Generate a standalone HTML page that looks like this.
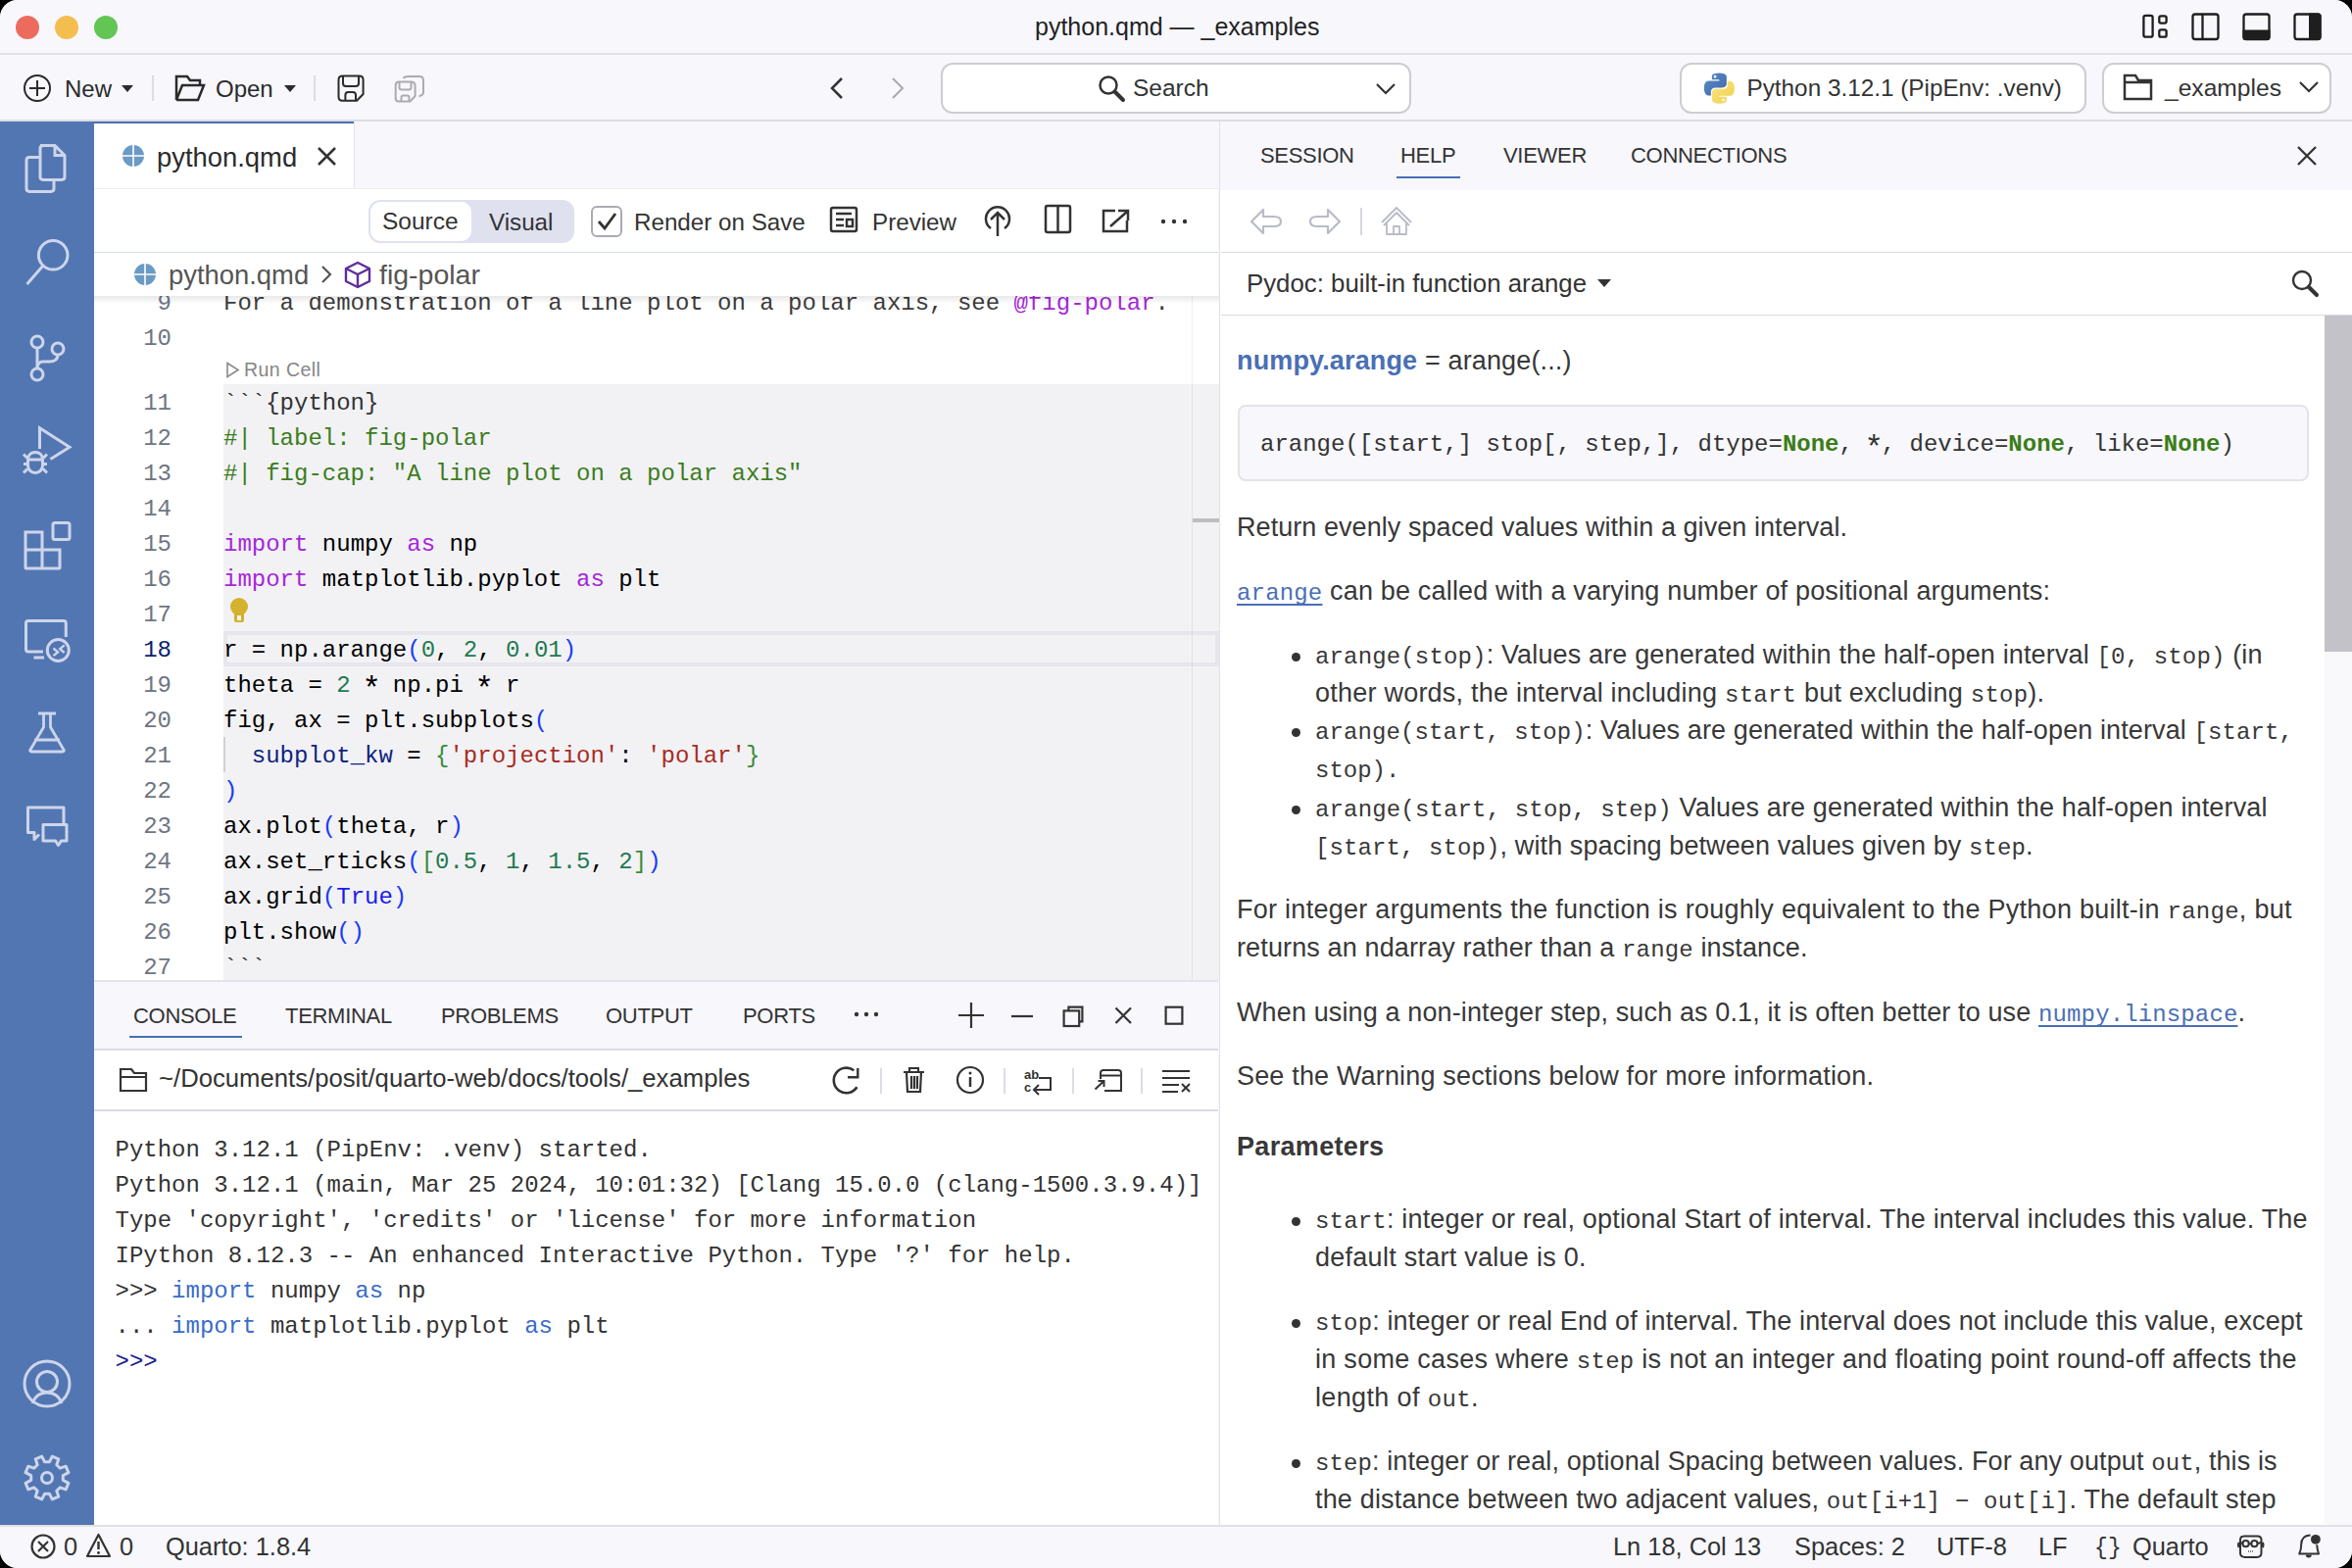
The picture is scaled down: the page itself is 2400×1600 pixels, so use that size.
<!DOCTYPE html>
<html><head><meta charset="utf-8">
<style>
html,body{margin:0;padding:0;}
body{width:2400px;height:1600px;overflow:hidden;background:#000;font-family:"Liberation Sans",sans-serif;color:#333;}
#win{position:absolute;left:0;top:0;width:2400px;height:1600px;border-radius:18px;overflow:hidden;background:#f7f7fc;}
.a{position:absolute;}
.t{position:absolute;white-space:pre;line-height:1;margin-top:-0.8467em;}
.m{font-family:"Liberation Mono",monospace;margin-top:-0.7661em;}
svg{position:absolute;overflow:visible;}
.hp{font-size:27px;color:#383838;}
.mi{font-family:"Liberation Mono",monospace;font-size:24px;}
.lk{color:#4a6fb5;text-decoration:underline;text-underline-offset:4px;text-decoration-thickness:2px;text-decoration-skip-ink:none;}
.hl{position:absolute;height:2px;background:#e3e3ea;}
.vl{position:absolute;width:2px;background:#e3e3ea;}
</style></head><body>
<div id="win">

<!-- TITLE BAR -->
<div class="a" style="left:0;top:0;width:2400px;height:54px;background:#f7f7fc;"></div>
<div class="hl" style="left:0;top:54px;width:2400px;background:#e2e2e8;"></div>
<svg style="left:0;top:0" width="140" height="56">
  <circle cx="28" cy="28" r="12" fill="#ec6b5e"/>
  <circle cx="68" cy="28" r="12" fill="#f4be4f"/>
  <circle cx="108" cy="28" r="12" fill="#62c554"/>
</svg>
<div class="t" id="title" style="left:1056px;top:36.5px;font-size:25px;color:#222;">python.qmd — _examples</div>
<svg style="left:2180px;top:10px" width="200" height="36" fill="none" stroke="#1e1e1e" stroke-width="2.3">
  <rect x="7.4" y="5.8" width="9.2" height="21.9" rx="2"/>
  <rect x="23.3" y="6.3" width="7.3" height="7.3" rx="1.8"/>
  <rect x="23.3" y="20.3" width="7.3" height="7.4" rx="1.8"/>
  <rect x="57.5" y="4.5" width="26" height="25.5" rx="2.5"/>
  <line x1="67.5" y1="4.5" x2="67.5" y2="30"/>
  <rect x="109.5" y="4.5" width="26" height="25.5" rx="2.5"/>
  <path d="M108.4 20.5 H136.6 V28 Q136.6 31.1 133.5 31.1 H111.5 Q108.4 31.1 108.4 28 Z" fill="#1e1e1e" stroke="none"/>
  <rect x="161.5" y="4.5" width="26" height="25.5" rx="2.5"/>
  <path d="M176 3.4 H185.5 Q188.6 3.4 188.6 6.5 V28 Q188.6 31.1 185.5 31.1 H176 Z" fill="#1e1e1e" stroke="none"/>
</svg>

<!-- TOOLBAR -->
<div class="hl" style="left:0;top:122px;width:2400px;background:#dcdce3;"></div>
<svg style="left:0;top:56px" width="460" height="66" fill="none" stroke="#2b2b2b" stroke-width="2.5">
  <circle cx="38" cy="34" r="13" stroke-width="2"/>
  <line x1="38" y1="26" x2="38" y2="42" stroke-width="2"/><line x1="30" y1="34" x2="46" y2="34" stroke-width="2"/>
  <path d="M124 31 L136 31 L130 38 Z" fill="#2b2b2b" stroke="none"/>
  <line x1="156" y1="21" x2="156" y2="47" stroke="#dcdce3" stroke-width="2"/>
  <path d="M180 46 V22 H191 L194 26 H204 V31 M180 46 H202 L208 31 H186 L180 46"/>
  <path d="M290 31 L302 31 L296 38 Z" fill="#2b2b2b" stroke="none"/>
  <line x1="321" y1="21" x2="321" y2="47" stroke="#dcdce3" stroke-width="2"/>
  <g stroke-width="2" stroke-linejoin="round">
  <path d="M349.5 21.5 H366.6 Q370.6 21.5 370.6 25.5 V40 L364 46.8 H349.5 Q345.5 46.8 345.5 42.8 V25.5 Q345.5 21.5 349.5 21.5 Z"/>
  <path d="M350 22 V29 Q350 32 353 32 H363 Q366 32 366 29 V22"/>
  <path d="M352.4 46.5 V41 Q352.4 38 355.4 38 H360 Q363 38 363 41 V46.5"/>
  </g>
  <g stroke="#ababb0" stroke-width="2" stroke-linejoin="round">
   <path d="M407 27.6 H419 Q423.6 27.6 423.6 32 V42 L418.5 47.5 H407 Q403.7 47.5 403.7 44 V31 Q403.7 27.6 407 27.6 Z"/>
   <path d="M407.5 28 V33 Q407.5 35.5 410 35.5 H417 Q419.5 35.5 419.5 33 V28"/>
   <path d="M409.5 47 V43.5 Q409.5 41.5 411.5 41.5 H415.5 Q417.5 41.5 417.5 43.5 V47"/>
   <path d="M411.4 24 Q413 22 416 22 H428 Q432 22 432 26 V38.6 Q432 41 427.5 42.4"/>
  </g>
</svg>
<div class="t" style="left:66px;top:99px;font-size:24px;color:#2b2b2b;">New</div>
<div class="t" style="left:220px;top:99px;font-size:24px;color:#2b2b2b;">Open</div>
<svg style="left:840px;top:70px" width="90" height="40" fill="none" stroke-width="2.5">
  <path d="M19 10 L9 20 L19 30" stroke="#333"/>
  <path d="M71 10 L81 20 L71 30" stroke="#a9a9b0" stroke-width="2"/>
</svg>
<div class="a" style="left:960px;top:64px;width:476px;height:48px;border:2px solid #cdcdd3;border-radius:12px;background:#fff;"></div>
<svg style="left:1120px;top:76px" width="30" height="30" fill="none" stroke="#333" stroke-width="2.5">
  <circle cx="11" cy="11" r="8.5"/><line x1="17.5" y1="17.5" x2="26" y2="26" stroke-width="4" stroke-linecap="round"/>
</svg>
<div class="t" style="left:1156px;top:99px;font-size:24.5px;color:#333;">Search</div>
<svg style="left:1400px;top:78px" width="30" height="24" fill="none" stroke="#333" stroke-width="2.2">
  <path d="M5 8 L14 17 L23 8"/>
</svg>
<div class="a" style="left:1714px;top:64px;width:411px;height:48px;border:2px solid #cdcdd3;border-radius:12px;background:#fff;"></div>
<svg style="left:1736.5px;top:72.6px" width="34.5" height="34.5" viewBox="0 0 110 110"><defs><linearGradient id="pyb" x1="0" y1="0" x2="1" y2="1"><stop offset="0" stop-color="#5b8bc8"/><stop offset="1" stop-color="#3f6aa6"/></linearGradient><linearGradient id="pyy" x1="0" y1="0" x2="1" y2="1"><stop offset="0" stop-color="#f8e58a"/><stop offset="1" stop-color="#f1cf45"/></linearGradient></defs>
  <path d="M54.9 4.5c-25 0-23.5 10.9-23.5 10.9v11.3h23.9v3.4H21.9S5.9 28.3 5.9 53.6c0 25.3 14 24.4 14 24.4h8.4V66.3s-.5-14 13.8-14h23.7s13.4.2 13.4-12.9V17.3S81.2 4.5 54.9 4.5zM41.7 12.1c2.4 0 4.3 1.9 4.3 4.3s-1.9 4.3-4.3 4.3-4.3-1.9-4.3-4.3 1.9-4.3 4.3-4.3z" fill="url(#pyb)"/>
  <path d="M55.6 104.5c25 0 23.5-10.9 23.5-10.9V82.3H55.2v-3.4h33.4s16 1.8 16-23.5c0-25.3-14-24.4-14-24.4h-8.4v11.7s.5 14-13.8 14H44.7s-13.4-.2-13.4 12.9v21.6s-2 13.3 24.3 13.3zm13.2-7.6c-2.4 0-4.3-1.9-4.3-4.3s1.9-4.3 4.3-4.3 4.3 1.9 4.3 4.3-1.9 4.3-4.3 4.3z" fill="url(#pyy)"/>
</svg>
<div class="t" style="left:1782.5px;top:99px;font-size:24.3px;color:#333;">Python 3.12.1 (PipEnv: .venv)</div>
<div class="a" style="left:2145px;top:64px;width:230px;height:48px;border:2px solid #cdcdd3;border-radius:12px;background:#fff;"></div>
<svg style="left:2160px;top:72px" width="220" height="36" fill="none" stroke="#333" stroke-width="2.5">
  <path d="M8 5 V29 H35 V10 H22 L19 5 Z M8 12 H35"/>
  <path d="M187 12 L196 21 L205 12" stroke-width="2.2"/>
</svg>
<div class="t" style="left:2209px;top:99px;font-size:24.6px;color:#333;">_examples</div>

<!-- ACTIVITY BAR -->
<div class="a" style="left:0;top:124px;width:96px;height:1432px;background:#5276b2;"></div>
<svg style="left:0;top:124px" width="96" height="1432" fill="none" stroke="#cdd5eb" stroke-width="3">
  <!-- files -->
  <path d="M41 24.5 H56 L66 34.5 V56.5 Q66 59.4 63 59.4 H44 Q41 59.4 41 56.5 V27.5 Q41 24.5 44 24.5 Z M56 24.5 V34.5 H66"/>
  <path d="M41 36.6 H30 Q27 36.6 27 39.5 V68.5 Q27 71.4 30 71.4 H52 Q55 71.4 55 68.5 V59.4"/>
  <!-- search -->
  <circle cx="54.2" cy="136.3" r="14.8"/><line x1="44" y1="147" x2="27.5" y2="166"/>
  <!-- git -->
  <circle cx="38" cy="225" r="6"/><circle cx="38" cy="258" r="6"/><circle cx="59" cy="232" r="6"/>
  <line x1="38" y1="231" x2="38" y2="252"/><path d="M59 238 Q59 245 50 245 H44 Q38 245 38 252"/>
  <!-- debug -->
  <path d="M40.5 334 V312.8 L71 332.2 L51.5 344.5"/>
  <path d="M28.5 345 C28.5 340 32 337.5 36 337.5 C40 337.5 43.5 340 43.5 345 Z"/>
  <path d="M28.5 345 V351 C28.5 355.5 32 358.5 36 358.5 C40 358.5 43.5 355.5 43.5 351 V345"/>
  <path d="M24 339.5 L28 343.5 M48 339.5 L44 343.5 M24 349.5 H28 M44 349.5 H48 M24 358.5 L28 354.5 M48 358.5 L44 354.5"/>
  <!-- extensions -->
  <path d="M26 419 H43 V437 H61 V455 Q61 456 60 456 H27 Q26 456 26 455 Z M26 437 H43 V456"/>
  <rect x="54" y="409.5" width="17" height="17" rx="2"/>
  <!-- remote -->
  <path d="M44 541 H29 Q26.5 541 26.5 538.5 V512 Q26.5 509.6 29 509.6 H64.8 Q67.3 509.6 67.3 512 V526"/>
  <path d="M34.5 547 H45"/>
  <circle cx="59.3" cy="539.5" r="11"/>
  <path d="M54.5 537.5 L59 541.4 L54.5 545.2 M65.7 534.4 L61.2 538.2 L65.7 542" stroke-width="2.4"/>
  <!-- flask -->
  <path d="M39 604 H57 M44.5 604 V618 L31 641 Q30 643 32.5 643 H63.5 Q66 643 65 641 L51.5 618 V604 M35 631 H61" stroke-linejoin="round" stroke-width="2.8"/>
  <!-- chat -->
  <path d="M65 717 V700 H28.5 V725.6 H35 V732.5 L40 727.5" stroke-linejoin="round"/>
  <path d="M44 717.4 H68 V733.9 H62.5 L59.5 738.5 L56.5 733.9 H44 Z" stroke-linejoin="round"/>
  <!-- account -->
  <circle cx="48" cy="1288" r="23"/><circle cx="48" cy="1286" r="10.5"/><path d="M33 1308 Q37 1297 48 1297 Q59 1297 63 1308"/>
  <!-- gear -->
  <circle cx="48" cy="1384" r="5.5"/>
  <path d="M64.3 1386.4 L69.9 1389.3 L67.2 1395.8 L61.3 1393.8 L57.8 1397.3 L59.8 1403.2 L53.3 1405.9 L50.4 1400.3 L45.6 1400.3 L42.7 1405.9 L36.2 1403.2 L38.2 1397.3 L34.7 1393.8 L28.8 1395.8 L26.1 1389.3 L31.7 1386.4 L31.7 1381.6 L26.1 1378.7 L28.8 1372.2 L34.7 1374.2 L38.2 1370.7 L36.2 1364.8 L42.7 1362.1 L45.6 1367.7 L50.4 1367.7 L53.3 1362.1 L59.8 1364.8 L57.8 1370.7 L61.3 1374.2 L67.2 1372.2 L69.9 1378.7 L64.3 1381.6 Z" stroke-linejoin="round"/>
</svg>

<!-- EDITOR TAB BAR -->
<div class="a" style="left:96px;top:124px;width:1147px;height:69px;background:#f7f7fc;"></div>
<div class="a" style="left:96px;top:124px;width:266px;height:69px;background:#fff;border-right:1px solid #e3e3ea;box-sizing:border-box;"></div>
<div class="hl" style="left:96px;top:192px;width:1147px;height:1px;background:#ececf2;"></div>
<div class="a" style="left:96px;top:124px;width:265px;height:2px;background:#4a6fb5;"></div>
<svg style="left:124px;top:147px" width="24" height="24">
  <circle cx="12" cy="12" r="11" fill="#6b9ac4"/><path d="M12 1 V23 M1 12 H23" stroke="#fff" stroke-width="1.6"/>
</svg>
<div class="t" style="left:160px;top:170px;font-size:27.4px;color:#2b2b2b;">python.qmd</div>
<svg style="left:322px;top:148px" width="24" height="24" stroke="#333" stroke-width="2.5">
  <path d="M3 3 L20 20 M20 3 L3 20"/>
</svg>

<!-- EDITOR TOOLBAR -->
<div class="a" style="left:96px;top:193px;width:1147px;height:64px;background:#fff;"></div>
<div class="hl" style="left:96px;top:257px;width:1147px;height:1px;background:#d5d8e6;"></div>
<div class="a" style="left:376px;top:204px;width:210px;height:44px;border-radius:12px;background:#dfe1ef;"></div>
<div class="a" style="left:378px;top:206px;width:103px;height:40px;border-radius:10px;background:#fff;"></div>
<div class="t" style="left:390px;top:235px;font-size:24.5px;color:#333;">Source</div>
<div class="t" style="left:499px;top:235px;font-size:24.2px;color:#333;">Visual</div>
<svg style="left:600px;top:208px" width="620" height="40" fill="none" stroke="#333" stroke-width="2.5">
  <rect x="4" y="3" width="30" height="30" rx="5" stroke="#aaaab2" stroke-width="2"/>
  <path d="M11 18 L17 25 L28 10" stroke="#333" stroke-width="2.8"/>
  <rect x="248" y="4" width="26" height="24" rx="2"/>
  <path d="M253 10 H269 M253 16 H261 M253 22 H261"/><rect x="264" y="16" width="6" height="7"/>
  <path d="M411 25 A12 12 0 1 1 425 25"/>
  <path d="M418 33 V9 M411 16 L418 9 L425 16"/>
  <rect x="467" y="2" width="25" height="27" rx="2"/><line x1="479.5" y1="2" x2="479.5" y2="29"/>
  <path d="M541 7 H551 V17 M550 8 L533 23 M538 7 H526 V28 H550 V17" stroke-linejoin="miter"/>
  <circle cx="587" cy="18" r="2.2" fill="#333" stroke="none"/><circle cx="598" cy="18" r="2.2" fill="#333" stroke="none"/><circle cx="609" cy="18" r="2.2" fill="#333" stroke="none"/>
</svg>
<div class="t" style="left:647px;top:235px;font-size:24.2px;color:#333;">Render on Save</div>
<div class="t" style="left:890px;top:235px;font-size:24.2px;color:#333;">Preview</div>

<!-- CODE EDITOR -->
<div class="a" style="left:96px;top:302px;width:1148px;height:698px;background:#fff;overflow:hidden;">
</div>
<div class="a" style="left:228px;top:392px;width:1016px;height:608px;background:#f2f2f5;"></div>
<div class="a" style="left:228px;top:644px;width:1016px;height:36px;box-sizing:border-box;border:4px solid #e6e6ec;"></div>
<div class="a" style="left:228px;top:752px;width:2px;height:36px;background:#d0d0d6;"></div>
<div class="a" style="left:1216px;top:302px;width:1px;height:698px;background:rgba(0,0,0,0.06);"></div>
<div class="a" style="left:1217px;top:529px;width:27px;height:3.5px;background:#bdbdc2;"></div>
<div id="lnums" class="m-wrap">
<div class="t m" style="left:75px;top:316.5px;width:100px;text-align:right;font-size:24px;color:#6e7583;">9</div>
<div class="t m" style="left:75px;top:352.5px;width:100px;text-align:right;font-size:24px;color:#6e7583;">10</div>
<div class="t m" style="left:75px;top:418.5px;width:100px;text-align:right;font-size:24px;color:#6e7583;">11</div>
<div class="t m" style="left:75px;top:454.5px;width:100px;text-align:right;font-size:24px;color:#6e7583;">12</div>
<div class="t m" style="left:75px;top:490.5px;width:100px;text-align:right;font-size:24px;color:#6e7583;">13</div>
<div class="t m" style="left:75px;top:526.5px;width:100px;text-align:right;font-size:24px;color:#6e7583;">14</div>
<div class="t m" style="left:75px;top:562.5px;width:100px;text-align:right;font-size:24px;color:#6e7583;">15</div>
<div class="t m" style="left:75px;top:598.5px;width:100px;text-align:right;font-size:24px;color:#6e7583;">16</div>
<div class="t m" style="left:75px;top:634.5px;width:100px;text-align:right;font-size:24px;color:#6e7583;">17</div>
<div class="t m" style="left:75px;top:670.5px;width:100px;text-align:right;font-size:24px;color:#0b1f6e;">18</div>
<div class="t m" style="left:75px;top:706.5px;width:100px;text-align:right;font-size:24px;color:#6e7583;">19</div>
<div class="t m" style="left:75px;top:742.5px;width:100px;text-align:right;font-size:24px;color:#6e7583;">20</div>
<div class="t m" style="left:75px;top:778.5px;width:100px;text-align:right;font-size:24px;color:#6e7583;">21</div>
<div class="t m" style="left:75px;top:814.5px;width:100px;text-align:right;font-size:24px;color:#6e7583;">22</div>
<div class="t m" style="left:75px;top:850.5px;width:100px;text-align:right;font-size:24px;color:#6e7583;">23</div>
<div class="t m" style="left:75px;top:886.5px;width:100px;text-align:right;font-size:24px;color:#6e7583;">24</div>
<div class="t m" style="left:75px;top:922.5px;width:100px;text-align:right;font-size:24px;color:#6e7583;">25</div>
<div class="t m" style="left:75px;top:958.5px;width:100px;text-align:right;font-size:24px;color:#6e7583;">26</div>
<div class="t m" style="left:75px;top:994.5px;width:100px;text-align:right;font-size:24px;color:#6e7583;">27</div>
</div>
<div class="t m" style="left:228px;top:316.5px;font-size:24px;color:#000;"><span style="color:#3b3b3b">For a demonstration of a line plot on a polar axis, see </span><span style="color:#a626d9">@fig-polar</span><span style="color:#3b3b3b">.</span></div>
<div class="t m" style="left:228px;top:418.5px;font-size:24px;color:#000;"><span style="color:#333">```{python}</span></div>
<div class="t m" style="left:228px;top:454.5px;font-size:24px;color:#000;"><span style="color:#3b7d1c">#| label: fig-polar</span></div>
<div class="t m" style="left:228px;top:490.5px;font-size:24px;color:#000;"><span style="color:#3b7d1c">#| fig-cap: "A line plot on a polar axis"</span></div>
<div class="t m" style="left:228px;top:562.5px;font-size:24px;color:#000;"><span style="color:#a626d9">import</span> numpy <span style="color:#a626d9">as</span> np</div>
<div class="t m" style="left:228px;top:598.5px;font-size:24px;color:#000;"><span style="color:#a626d9">import</span> matplotlib.pyplot <span style="color:#a626d9">as</span> plt</div>
<div class="t m" style="left:228px;top:670.5px;font-size:24px;color:#000;">r = np.arange<span style="color:#1a3cf5">(</span><span style="color:#1f7a4f">0</span>, <span style="color:#1f7a4f">2</span>, <span style="color:#1f7a4f">0.01</span><span style="color:#1a3cf5">)</span></div>
<div class="t m" style="left:228px;top:706.5px;font-size:24px;color:#000;">theta = <span style="color:#1f7a4f">2</span> <span style="display:inline-block;transform:translateY(5px) scale(1.35)">*</span> np.pi <span style="display:inline-block;transform:translateY(5px) scale(1.35)">*</span> r</div>
<div class="t m" style="left:228px;top:742.5px;font-size:24px;color:#000;">fig, ax = plt.subplots<span style="color:#1a3cf5">(</span></div>
<div class="t m" style="left:228px;top:778.5px;font-size:24px;color:#000;">  <span style="color:#0f1f80">subplot_kw</span> = <span style="color:#3a8a3a">{</span><span style="color:#a82b1e">'projection'</span>: <span style="color:#a82b1e">'polar'</span><span style="color:#3a8a3a">}</span></div>
<div class="t m" style="left:228px;top:814.5px;font-size:24px;color:#000;"><span style="color:#1a3cf5">)</span></div>
<div class="t m" style="left:228px;top:850.5px;font-size:24px;color:#000;">ax.plot<span style="color:#1a3cf5">(</span>theta, r<span style="color:#1a3cf5">)</span></div>
<div class="t m" style="left:228px;top:886.5px;font-size:24px;color:#000;">ax.set_rticks<span style="color:#1a3cf5">(</span><span style="color:#3a8a3a">[</span><span style="color:#1f7a4f">0.5</span>, <span style="color:#1f7a4f">1</span>, <span style="color:#1f7a4f">1.5</span>, <span style="color:#1f7a4f">2</span><span style="color:#3a8a3a">]</span><span style="color:#1a3cf5">)</span></div>
<div class="t m" style="left:228px;top:922.5px;font-size:24px;color:#000;">ax.grid<span style="color:#1a3cf5">(</span><span style="color:#1a1af0">True</span><span style="color:#1a3cf5">)</span></div>
<div class="t m" style="left:228px;top:958.5px;font-size:24px;color:#000;">plt.show<span style="color:#1a3cf5">()</span></div>
<div class="t m" style="left:228px;top:994.5px;font-size:24px;color:#000;"><span style="color:#333">```</span></div>
<div class="t" style="left:249px;top:384.5px;font-size:19.5px;letter-spacing:0.45px;color:#858585;">Run Cell</div>
<svg style="left:230px;top:369px" width="16" height="18" fill="none" stroke="#8a8a8a" stroke-width="1.6"><path d="M2 1.5 L13 8.5 L2 15.5 Z"/></svg>
<svg style="left:234px;top:609px" width="22" height="28"><circle cx="10" cy="10" r="9" fill="#d4b12e"/><rect x="5" y="16" width="10" height="10" rx="2" fill="#d4b12e"/><rect x="8" y="19" width="4" height="5" fill="#f2f2f5"/></svg>
<!-- BREADCRUMBS -->
<div class="a" style="left:96px;top:258px;width:1147px;height:44px;background:#fff;"></div>
<svg style="left:136px;top:268px" width="24" height="24">
  <circle cx="12" cy="12" r="11" fill="#6b9ac4"/><path d="M12 1 V23 M1 12 H23" stroke="#fff" stroke-width="1.6"/>
</svg>
<div class="t" style="left:172px;top:290px;font-size:27.4px;color:#555;">python.qmd</div>
<svg style="left:320px;top:266px" width="80" height="30" fill="none" stroke-width="2.2">
  <path d="M9 6 L17 14 L9 22" stroke="#555"/>
  <path d="M45 2 L57 8 V21 L45 27 L33 21 V8 Z M33 8 L45 14 L57 8 M45 14 V27" stroke="#5e2d9e" stroke-width="2.4" stroke-linejoin="round"/>
</svg>
<div class="t" style="left:387px;top:290px;font-size:28.5px;color:#555;">fig-polar</div>

<!-- breadcrumb shadow -->
<div class="a" style="left:96px;top:302px;width:1148px;height:8px;background:linear-gradient(rgba(0,0,0,0.09),rgba(0,0,0,0));"></div>

<!-- BOTTOM PANEL -->
<div class="a" style="left:96px;top:1000px;width:1147px;height:556px;background:#fff;"></div>
<div class="hl" style="left:96px;top:1000px;width:1147px;background:#e3e3ea;"></div>
<div class="a" style="left:96px;top:1002px;width:1147px;height:68px;background:#f7f7fc;"></div>
<div class="hl" style="left:96px;top:1070px;width:1147px;height:1.5px;background:#dcdce6;"></div>
<div class="hl" style="left:96px;top:1132px;width:1147px;height:1.5px;background:#dcdce6;"></div>
<div class="t" style="left:136px;top:1044.5px;font-size:22px;color:#333;letter-spacing:-0.3px;">CONSOLE</div>
<div class="t" style="left:291px;top:1044.5px;font-size:22px;color:#333;letter-spacing:-0.3px;">TERMINAL</div>
<div class="t" style="left:450px;top:1044.5px;font-size:22px;color:#333;letter-spacing:-0.3px;">PROBLEMS</div>
<div class="t" style="left:618px;top:1044.5px;font-size:22px;color:#333;letter-spacing:-0.3px;">OUTPUT</div>
<div class="t" style="left:758px;top:1044.5px;font-size:22px;color:#333;letter-spacing:-0.3px;">PORTS</div>
<div class="a" style="left:132px;top:1057px;width:115px;height:2px;background:#4a6fb5;"></div>
<svg style="left:860px;top:1016px" width="370" height="40" fill="none" stroke="#333" stroke-width="2.2">
  <circle cx="14" cy="19" r="2.2" fill="#333" stroke="none"/><circle cx="24" cy="19" r="2.2" fill="#333" stroke="none"/><circle cx="34" cy="19" r="2.2" fill="#333" stroke="none"/>
  <path d="M131 7 V33 M118 20 H144"/>
  <path d="M172 21 H194"/>
  <rect x="225.6" y="15.4" width="15.6" height="15.6"/><path d="M230.4 15.4 V11.6 H244.4 V26.4 H241.2"/>
  <path d="M278.5 12.5 L294 28 M294 12.5 L278.5 28"/>
  <rect x="329.6" y="11.7" width="16.8" height="17"/>
</svg>
<svg style="left:110px;top:1080px" width="1120" height="45" fill="none" stroke="#333" stroke-width="2.2">
  <path d="M13 33 V11 H24 L27 15 H39 V33 Z M13 19 H39"/>
  <path d="M761.3 12.2 A12.8 12.8 0 1 0 764.45 29.2" stroke-width="2.6"/><path d="M755 19.3 H765.3 V10" stroke-width="2.4"/>
  <line x1="789" y1="10" x2="789" y2="36" stroke="#dcdce6" stroke-width="2"/>
  <path d="M812 14 H833 M818 14 V10 H827 V14 M815 14 L816 34 H829 L830 14 M820 18 V31 M823 18 V31 M826 18 V31"/>
  <circle cx="880" cy="22" r="13"/><path d="M880 19 V29" stroke-width="2.5"/><circle cx="880" cy="15" r="1.5" fill="#333" stroke="none"/>
  <line x1="915" y1="10" x2="915" y2="36" stroke="#dcdce6" stroke-width="2"/>
  <text x="935" y="21" font-family="Liberation Sans" font-size="13" font-weight="bold" fill="#333" stroke="none">ab</text>
  <text x="935" y="34" font-family="Liberation Sans" font-size="13" font-weight="bold" fill="#333" stroke="none">c</text>
  <path d="M950 20 H962 V32 H945 M950 27 L945 32 L950 37" stroke-width="2"/>
  <line x1="985" y1="10" x2="985" y2="36" stroke="#dcdce6" stroke-width="2"/>
  <path d="M1013 21 V15 Q1013 12 1016 12 H1031 Q1034 12 1034 15 V33 H1017 M1013 17.5 H1034" stroke-width="2"/><path d="M1007.5 31.5 L1016 23.5 M1010.5 23 H1016.5 V29" stroke-width="2"/>
  <line x1="1055" y1="10" x2="1055" y2="36" stroke="#dcdce6" stroke-width="2"/>
  <path d="M1076 13 H1104 M1076 20 H1104 M1076 27 H1093 M1076 34 H1092 M1096 26 L1104 34 M1104 26 L1096 34" stroke-width="2"/>
</svg>
<div class="t" style="left:162px;top:1110px;font-size:25.7px;color:#333;">~/Documents/posit/quarto-web/docs/tools/_examples</div>
<div class="t m" style="left:117.5px;top:1180px;font-size:24px;color:#333;">Python 3.12.1 (PipEnv: .venv) started.</div>
<div class="t m" style="left:117.5px;top:1216px;font-size:24px;color:#333;">Python 3.12.1 (main, Mar 25 2024, 10:01:32) [Clang 15.0.0 (clang-1500.3.9.4)]</div>
<div class="t m" style="left:117.5px;top:1252px;font-size:24px;color:#333;">Type 'copyright', 'credits' or 'license' for more information</div>
<div class="t m" style="left:117.5px;top:1288px;font-size:24px;color:#333;">IPython 8.12.3 -- An enhanced Interactive Python. Type '?' for help.</div>
<div class="t m" style="left:117.5px;top:1324px;font-size:24px;color:#333;">&gt;&gt;&gt; <span style="color:#3a6cc8">import</span> numpy <span style="color:#3a6cc8">as</span> np</div>
<div class="t m" style="left:117.5px;top:1360px;font-size:24px;color:#333;">... <span style="color:#3a6cc8">import</span> matplotlib.pyplot <span style="color:#3a6cc8">as</span> plt</div>
<div class="t m" style="left:117.5px;top:1396px;font-size:24px;color:#333;"><span style="color:#1a1a8a">&gt;&gt;&gt;</span></div>

<!-- VERTICAL DIVIDER -->
<div class="vl" style="left:1244px;top:124px;height:1432px;background:#e1e1e8;"></div>

<!-- RIGHT PANEL -->
<div class="a" style="left:1245px;top:124px;width:1155px;height:70px;background:#f7f7fc;"></div>
<div class="t" style="left:1286px;top:167px;font-size:22px;color:#333;letter-spacing:-0.3px;">SESSION</div>
<div class="t" style="left:1429px;top:167px;font-size:22px;color:#333;letter-spacing:-0.3px;">HELP</div>
<div class="t" style="left:1534px;top:167px;font-size:22px;color:#333;letter-spacing:-0.3px;">VIEWER</div>
<div class="t" style="left:1664px;top:167px;font-size:22px;color:#333;letter-spacing:-0.3px;">CONNECTIONS</div>
<div class="a" style="left:1425px;top:180px;width:65px;height:2px;background:#4a6fb5;"></div>
<svg style="left:2340px;top:145px" width="28" height="28" stroke="#333" stroke-width="2.3"><path d="M5 5 L23 23 M23 5 L5 23"/></svg>
<div class="a" style="left:1245px;top:194px;width:1155px;height:1362px;background:#fff;"></div>
<div class="hl" style="left:1246px;top:257px;height:1px;width:1154px;background:#d8dbe6;"></div>
<div class="hl" style="left:1246px;top:321px;height:1px;width:1154px;background:#d8dbe6;"></div>
<svg style="left:1270px;top:206px" width="180" height="40" fill="none" stroke="#b9bbc8" stroke-width="2.2" stroke-linejoin="round">
  <path d="M7 20 L19 8 V15 H30 Q37 15 37 20 Q37 25 30 25 H19 V32 Z"/>
  <path d="M97 20 L85 8 V15 H74 Q67 15 67 20 Q67 25 74 25 H85 V32 Z"/>
  <line x1="119" y1="6" x2="119" y2="34" stroke="#d5d7e0" stroke-width="2"/>
  <path d="M140 21 L155 6 L170 21 M142 24 L155 11 L168 24 M145 21 V33 H165 V21 M152 33 V25 H158 V33" stroke-width="1.8"/>
</svg>
<div class="t" style="left:1272px;top:299px;font-size:25.8px;color:#333;">Pydoc: built-in function arange</div>
<svg style="left:1626px;top:280px" width="30" height="20"><path d="M4 5 H18 L11 13 Z" fill="#333"/></svg>
<svg style="left:2336px;top:273px" width="34" height="34" fill="none" stroke="#333" stroke-width="2.4">
  <circle cx="13" cy="13" r="9"/><line x1="20" y1="20" x2="28" y2="28" stroke-width="4" stroke-linecap="round"/>
</svg>
<div class="a" style="left:2372px;top:322px;width:28px;height:344px;background:#c2c2c8;"></div>
<div class="a" style="left:2372px;top:665px;width:28px;height:891px;background:#f9f9fb;"></div>
<div class="t hp" id="h0" style="letter-spacing:0.144px;left:1262px;top:377.5px;"><b style="color:#4a6fb5">numpy.arange</b> = arange(...)</div>
<div class="t hp" id="h1" style="letter-spacing:0.062px;left:1262px;top:547.5px;">Return evenly spaced values within a given interval.</div>
<div class="t hp" id="h2" style="letter-spacing:0.169px;left:1262px;top:612.5px;"><span class="mi lk">arange</span> can be called with a varying number of positional arguments:</div>
<div class="t hp" id="h3" style="letter-spacing:0.151px;left:1342px;top:677.5px;"><span class="mi">arange(stop)</span>: Values are generated within the half-open interval <span class="mi">[0, stop)</span> (in</div>
<div class="t hp" id="h4" style="letter-spacing:0.23px;left:1342px;top:716.5px;">other words, the interval including <span class="mi">start</span> but excluding <span class="mi">stop</span>).</div>
<div class="t hp" id="h5" style="letter-spacing:0.111px;left:1342px;top:755.0px;"><span class="mi">arange(start, stop)</span>: Values are generated within the half-open interval <span class="mi">[start,</span></div>
<div class="t hp" id="h6" style="letter-spacing:0px;left:1342px;top:794.0px;"><span class="mi">stop).</span></div>
<div class="t hp" id="h7" style="letter-spacing:0.154px;left:1342px;top:833.5px;"><span class="mi">arange(start, stop, step)</span> Values are generated within the half-open interval</div>
<div class="t hp" id="h8" style="letter-spacing:0.105px;left:1342px;top:872.5px;"><span class="mi">[start, stop)</span>, with spacing between values given by <span class="mi">step</span>.</div>
<div class="t hp" id="h9" style="letter-spacing:0.274px;left:1262px;top:937.5px;">For integer arguments the function is roughly equivalent to the Python built-in <span class="mi">range</span>, but</div>
<div class="t hp" id="h10" style="letter-spacing:0.132px;left:1262px;top:976.5px;">returns an ndarray rather than a <span class="mi">range</span> instance.</div>
<div class="t hp" id="h11" style="letter-spacing:0.129px;left:1262px;top:1042.5px;">When using a non-integer step, such as 0.1, it is often better to use <span class="mi lk">numpy.linspace</span>.</div>
<div class="t hp" id="h12" style="letter-spacing:0.17px;left:1262px;top:1107.5px;">See the Warning sections below for more information.</div>
<div class="t hp" id="h13" style="letter-spacing:0.321px;left:1262px;top:1180.0px;"><b>Parameters</b></div>
<div class="t hp" id="h14" style="letter-spacing:0.176px;left:1342px;top:1253.5px;"><span class="mi">start</span>: integer or real, optional Start of interval. The interval includes this value. The</div>
<div class="t hp" id="h15" style="letter-spacing:0.264px;left:1342px;top:1292.5px;">default start value is 0.</div>
<div class="t hp" id="h16" style="letter-spacing:0.144px;left:1342px;top:1357.5px;"><span class="mi">stop</span>: integer or real End of interval. The interval does not include this value, except</div>
<div class="t hp" id="h17" style="letter-spacing:0.284px;left:1342px;top:1397.0px;">in some cases where <span class="mi">step</span> is not an integer and floating point round-off affects the</div>
<div class="t hp" id="h18" style="letter-spacing:0.359px;left:1342px;top:1436.0px;">length of <span class="mi">out</span>.</div>
<div class="t hp" id="h19" style="letter-spacing:0.106px;left:1342px;top:1501.0px;"><span class="mi">step</span>: integer or real, optional Spacing between values. For any output <span class="mi">out</span>, this is</div>
<div class="t hp" id="h20" style="letter-spacing:0.167px;left:1342px;top:1540.0px;">the distance between two adjacent values, <span class="mi">out[i+1] − out[i]</span>. The default step</div>
<div class="a" style="left:1318px;top:665.5px;width:9px;height:9px;border-radius:50%;background:#333;"></div>
<div class="a" style="left:1318px;top:743px;width:9px;height:9px;border-radius:50%;background:#333;"></div>
<div class="a" style="left:1318px;top:821.5px;width:9px;height:9px;border-radius:50%;background:#333;"></div>
<div class="a" style="left:1318px;top:1241.5px;width:9px;height:9px;border-radius:50%;background:#333;"></div>
<div class="a" style="left:1318px;top:1345.5px;width:9px;height:9px;border-radius:50%;background:#333;"></div>
<div class="a" style="left:1318px;top:1489px;width:9px;height:9px;border-radius:50%;background:#333;"></div>
<div class="a" style="left:1263px;top:413px;width:1093px;height:78px;box-sizing:border-box;border:2px solid #e3e3e9;border-radius:8px;background:#f7f7fc;"></div>
<div class="t m" style="left:1286px;top:460px;font-size:24px;color:#333;">arange([start,] stop[, step,], dtype=<b style="color:#3a7d17">None</b>, <span style="display:inline-block;transform:translateY(5px) scale(1.35)">*</span>, device=<b style="color:#3a7d17">None</b>, like=<b style="color:#3a7d17">None</b>)</div>

<!-- STATUS BAR -->
<div class="a" style="left:0;top:1556px;width:2400px;height:44px;background:#f7f7fc;"></div>
<div class="hl" style="left:0;top:1556px;width:2400px;background:#e0e0e6;"></div>
<svg style="left:28px;top:1562px" width="100" height="32" fill="none" stroke="#333" stroke-width="2.2">
  <circle cx="16" cy="16" r="11.5"/><path d="M11 11 L21 21 M21 11 L11 21"/>
  <path d="M72.5 4 L84 26 H61 Z" stroke-linejoin="round"/><path d="M72.5 11 V19" stroke-width="2.4"/><circle cx="72.5" cy="22.5" r="1.4" fill="#333" stroke="none"/>
</svg>
<div class="t" style="left:65px;top:1587px;font-size:25.4px;color:#333;">0</div>
<div class="t" style="left:122px;top:1587px;font-size:25.4px;color:#333;">0</div>
<div class="t" style="left:169px;top:1587px;font-size:25.4px;color:#333;">Quarto: 1.8.4</div>
<div class="t" style="left:1646px;top:1587px;font-size:25.4px;color:#333;">Ln 18, Col 13</div>
<div class="t" style="left:1831px;top:1587px;font-size:25.4px;color:#333;">Spaces: 2</div>
<div class="t" style="left:1976px;top:1587px;font-size:25.4px;color:#333;">UTF-8</div>
<div class="t" style="left:2080px;top:1587px;font-size:25.4px;color:#333;">LF</div>
<div class="t m" style="left:2137px;top:1587px;font-size:23px;color:#333;">{</div><div class="t m" style="left:2151px;top:1587px;font-size:23px;color:#333;">}</div>
<div class="t" style="left:2176px;top:1587px;font-size:25.4px;color:#333;">Quarto</div>
<svg style="left:2280px;top:1562px" width="100" height="34" fill="none" stroke="#333" stroke-width="2">
  <path d="M6 9.4 Q6 5.4 10 5.4 H23.5 Q27.5 5.4 27.5 9.4 V22.5 Q27.5 26.9 23 26.9 H10.5 Q6 26.9 6 22.5 Z"/>
  <path d="M4.8 12 Q3.6 14.5 4.8 17 M28.7 12 Q29.9 14.5 28.7 17" stroke-width="2.4"/>
  <circle cx="11.6" cy="13.2" r="3.1"/><circle cx="20.4" cy="13.2" r="3.1"/><path d="M14.7 13.2 H17.3 M6 12 L8.5 13 M27.5 12 L23.5 13"/>
  <path d="M14.2 21 H15 M16.2 21 H17 M18.2 21 H19" stroke-width="1.6"/>
  <path d="M77.5 4.5 Q68.2 5 68.2 14 Q68.2 19.5 66.2 23.6 H86 Q84.5 19.5 84.2 14.2" stroke-linejoin="round"/>
  <path d="M72.8 24.5 A3 3 0 0 0 78.8 24.5 Z" fill="#333" stroke="none"/>
  <circle cx="82.9" cy="8.8" r="4.9" fill="#333" stroke="none"/>
</svg>

</div>
</body></html>
